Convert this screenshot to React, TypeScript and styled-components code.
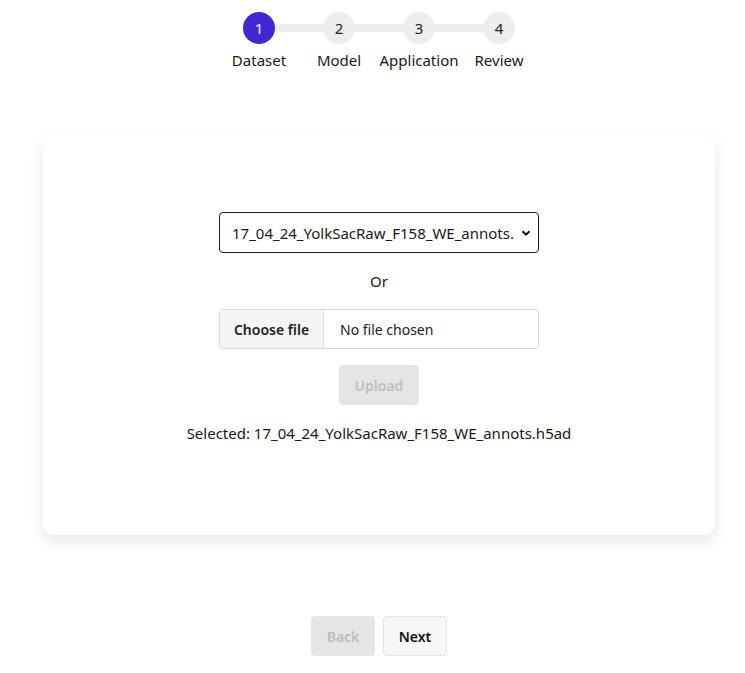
import React from "react";
import styled, { createGlobalStyle } from "styled-components";

const Global = createGlobalStyle`
  html, body { margin: 0; padding: 0; background: #fff; }
  body { font-family: "Segoe UI", "Noto Sans", "Open Sans", sans-serif; color: #1a1a1a; }
  * { box-sizing: border-box; }
`;

const Page = styled.div`
  width: 745px;
  padding-left: 13px;
  display: flex;
  flex-direction: column;
  align-items: center;
`;

const Stepper = styled.div`
  position: relative;
  display: flex;
  margin-top: 12px;
`;

const Track = styled.div`
  position: absolute;
  left: 40px;
  right: 40px;
  top: 12px;
  height: 8px;
  background: #ededed;
`;

const Step = styled.div`
  position: relative;
  width: 80px;
  display: flex;
  flex-direction: column;
  align-items: center;
`;

const Circle = styled.div<{ $active?: boolean }>`
  width: 32px;
  height: 32px;
  border-radius: 50%;
  background: ${(p) => (p.$active ? "#4127d6" : "#ededed")};
  color: ${(p) => (p.$active ? "#fff" : "#222")};
  display: flex;
  align-items: center;
  justify-content: center;
  font-size: 15px;
`;

const StepLabel = styled.div`
  margin-top: 6px;
  font-size: 15px;
  color: #1a1a1a;
  white-space: nowrap;
`;

const Card = styled.div`
  margin-top: 65px;
  width: 672px;
  height: 400px;
  background: #fff;
  border-radius: 12px;
  box-shadow: 0 6px 16px rgba(0, 0, 0, 0.1);
  display: flex;
  flex-direction: column;
  align-items: center;
  padding-top: 77px;
`;

const Select = styled.div`
  width: 320px;
  height: 41px;
  border: 1px solid #1f1f1f;
  border-radius: 4px;
  display: flex;
  align-items: center;
  justify-content: space-between;
  padding: 0 6px 0 12px;
  font-size: 15px;
  color: #1a1a1a;
`;

const OrText = styled.div`
  margin-top: 18px;
  font-size: 15px;
`;

const FileBox = styled.div`
  margin-top: 18px;
  width: 320px;
  height: 40px;
  border: 1px solid #d6d6d6;
  border-radius: 4px;
  display: flex;
  overflow: hidden;
  font-size: 14px;
`;

const ChooseBtn = styled.div`
  width: 104px;
  background: #f5f5f5;
  border-right: 1px solid #e0e0e0;
  display: flex;
  align-items: center;
  justify-content: center;
  font-weight: 600;
  color: #222;
`;

const FileName = styled.div`
  display: flex;
  align-items: center;
  padding-left: 16px;
  color: #222;
`;

const Button = styled.div<{ $disabled?: boolean; $w: number }>`
  width: ${(p) => p.$w}px;
  height: 40px;
  border-radius: 4px;
  display: flex;
  align-items: center;
  justify-content: center;
  font-size: 14px;
  font-weight: 600;
  background: ${(p) => (p.$disabled ? "#e5e5e5" : "#f7f7f7")};
  color: ${(p) => (p.$disabled ? "#bdbdbd" : "#111")};
  border: 1px solid ${(p) => (p.$disabled ? "#e5e5e5" : "#e3e3e3")};
`;

const UploadWrap = styled.div`
  margin-top: 16px;
`;

const Selected = styled.div`
  margin-top: 18px;
  font-size: 15px;
  color: #1a1a1a;
`;

const Nav = styled.div`
  margin-top: 81px;
  display: flex;
  gap: 8px;
`;

const steps = ["Dataset", "Model", "Application", "Review"];

export default function App() {
  return (
    <>
      <Global />
      <Page>
        <Stepper>
          <Track />
          {steps.map((s, i) => (
            <Step key={s}>
              <Circle $active={i === 0}>{i + 1}</Circle>
              <StepLabel>{s}</StepLabel>
            </Step>
          ))}
        </Stepper>
        <Card>
          <Select>
            <span>17_04_24_YolkSacRaw_F158_WE_annots.</span>
            <svg width="12" height="12" viewBox="0 0 12 12">
              <path d="M2.5 4.2 L6 7.7 L9.5 4.2" fill="none" stroke="#111" strokeWidth="2" />
            </svg>
          </Select>
          <OrText>Or</OrText>
          <FileBox>
            <ChooseBtn>Choose file</ChooseBtn>
            <FileName>No file chosen</FileName>
          </FileBox>
          <UploadWrap>
            <Button $disabled $w={80}>Upload</Button>
          </UploadWrap>
          <Selected>Selected: 17_04_24_YolkSacRaw_F158_WE_annots.h5ad</Selected>
        </Card>
        <Nav>
          <Button $disabled $w={64}>Back</Button>
          <Button $w={64}>Next</Button>
        </Nav>
      </Page>
    </>
  );
}
